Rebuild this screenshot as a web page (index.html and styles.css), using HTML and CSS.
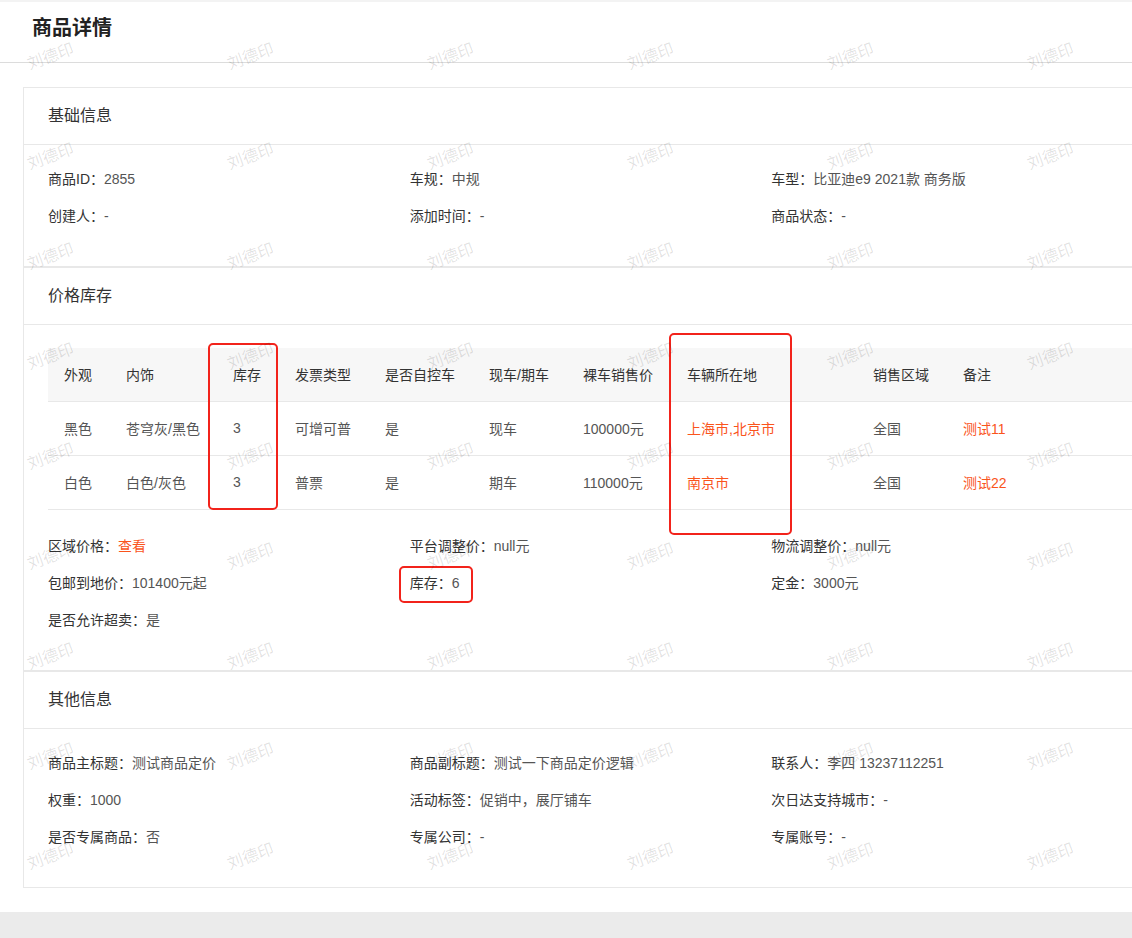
FILE: index.html
```html
<!DOCTYPE html>
<html lang="zh-CN">
<head>
    <meta charset="UTF-8">
    <meta name="viewport" content="width=device-width, initial-scale=1.0">
    <title>商品详情</title>
    <link rel="stylesheet" href="styles.css">
</head>
<body>
    <div class="page">
        <div class="page-header">
            <h1>商品详情</h1>
        </div>

        <div class="detail-card">
            <section class="panel">
                <div class="panel-title">基础信息</div>
                <div class="panel-body">
                    <div class="info-grid">
                        <div class="info-item"><span class="label">商品ID：</span><span class="value">2855</span></div>
                        <div class="info-item"><span class="label">车规：</span><span class="value">中规</span></div>
                        <div class="info-item"><span class="label">车型：</span><span class="value">比亚迪e9 2021款 商务版</span></div>
                        <div class="info-item"><span class="label">创建人：</span><span class="value">-</span></div>
                        <div class="info-item"><span class="label">添加时间：</span><span class="value">-</span></div>
                        <div class="info-item"><span class="label">商品状态：</span><span class="value">-</span></div>
                    </div>
                </div>
            </section>

            <section class="panel">
                <div class="panel-title">价格库存</div>
                <div class="panel-body">
                    <table class="stock-table">
                        <thead>
                            <tr>
                                <th>外观</th>
                                <th>内饰</th>
                                <th>库存</th>
                                <th>发票类型</th>
                                <th>是否自控车</th>
                                <th>现车/期车</th>
                                <th>裸车销售价</th>
                                <th>车辆所在地</th>
                                <th>销售区域</th>
                                <th>备注</th>
                            </tr>
                        </thead>
                        <tbody>
                            <tr>
                                <td>黑色</td>
                                <td>苍穹灰/黑色</td>
                                <td>3</td>
                                <td>可增可普</td>
                                <td>是</td>
                                <td>现车</td>
                                <td>100000元</td>
                                <td class="highlight">上海市,北京市</td>
                                <td>全国</td>
                                <td class="highlight">测试11</td>
                            </tr>
                            <tr>
                                <td>白色</td>
                                <td>白色/灰色</td>
                                <td>3</td>
                                <td>普票</td>
                                <td>是</td>
                                <td>期车</td>
                                <td>110000元</td>
                                <td class="highlight">南京市</td>
                                <td>全国</td>
                                <td class="highlight">测试22</td>
                            </tr>
                        </tbody>
                    </table>

                    <div class="info-grid after-table">
                        <div class="info-item"><span class="label">区域价格：</span><a class="link">查看</a></div>
                        <div class="info-item"><span class="label">平台调整价：</span><span class="value">null元</span></div>
                        <div class="info-item"><span class="label">物流调整价：</span><span class="value">null元</span></div>
                        <div class="info-item"><span class="label">包邮到地价：</span><span class="value">101400元起</span></div>
                        <div class="info-item"><span class="label">库存：</span><span class="value">6</span></div>
                        <div class="info-item"><span class="label">定金：</span><span class="value">3000元</span></div>
                        <div class="info-item"><span class="label">是否允许超卖：</span><span class="value">是</span></div>
                    </div>
                </div>
            </section>

            <section class="panel">
                <div class="panel-title">其他信息</div>
                <div class="panel-body">
                    <div class="info-grid">
                        <div class="info-item"><span class="label">商品主标题：</span><span class="value">测试商品定价</span></div>
                        <div class="info-item"><span class="label">商品副标题：</span><span class="value">测试一下商品定价逻辑</span></div>
                        <div class="info-item"><span class="label">联系人：</span><span class="value">李四 13237112251</span></div>
                        <div class="info-item"><span class="label">权重：</span><span class="value">1000</span></div>
                        <div class="info-item"><span class="label">活动标签：</span><span class="value">促销中，展厅铺车</span></div>
                        <div class="info-item"><span class="label">次日达支持城市：</span><span class="value">-</span></div>
                        <div class="info-item"><span class="label">是否专属商品：</span><span class="value">否</span></div>
                        <div class="info-item"><span class="label">专属公司：</span><span class="value">-</span></div>
                        <div class="info-item"><span class="label">专属账号：</span><span class="value">-</span></div>
                    </div>
                </div>
            </section>
        </div>

        <!-- red annotation boxes -->
        <div class="mark-box mark-stock-col"></div>
        <div class="mark-box mark-location-col"></div>
        <div class="mark-box mark-stock-total"></div>

        <div class="watermark" id="watermark"></div>
    </div>

    <script>
        // Fill the watermark layer
        const watermark = document.getElementById('watermark');
        for (let i = 0; i < 54; i++) {
            const mark = document.createElement('span');
            mark.textContent = '刘德印';
            watermark.appendChild(mark);
        }
    </script>
</body>
</html>
```

FILE: styles.css
```css
body {
    margin: 0;
    background: #ebebeb;
    font-family: 'Liberation Sans', 'Noto Sans CJK SC', sans-serif;
    font-size: 14px;
    color: #333;
}

.page {
    position: relative;
    background: #fff;
    border-top: 2px solid #f3f3f3;
    padding-bottom: 24px;
    overflow: hidden;
}

.page-header {
    height: 61px;
    padding: 0 32px;
    border-bottom: 1px solid #dcdcdc;
    box-sizing: border-box;
}

.page-header h1 {
    margin: 0;
    padding-top: 15px;
    font-size: 20px;
    line-height: 22px;
    font-weight: 600;
    color: #222;
}

.detail-card {
    width: 1135px;
    margin: 24px 0 0 23px;
}

.panel {
    border: 1px solid #e8e8e8;
}

.panel-title {
    height: 56px;
    line-height: 56px;
    padding: 0 24px;
    font-size: 16px;
    color: #333;
    border-bottom: 1px solid #e8e8e8;
}

.panel-body {
    padding: 23px 24px 24px;
}

.info-grid {
    display: grid;
    grid-template-columns: repeat(3, 1fr);
}

.info-grid.after-table {
    margin-top: 25px;
}

.info-item {
    line-height: 22px;
    margin-bottom: 15px;
    white-space: nowrap;
}

.info-item .label {
    color: #333;
}

.info-item .value {
    color: #555;
}

.link {
    color: #fa541c;
    cursor: pointer;
}

/* stock table */
.stock-table {
    width: 1085px;
    table-layout: fixed;
    border-collapse: separate;
    border-spacing: 0;
}

.stock-table th,
.stock-table td {
    box-sizing: border-box;
    height: 54px;
    padding: 0 16px 2px;
    text-align: left;
    white-space: nowrap;
    border-bottom: 1px solid #e8e8e8;
}

.stock-table th {
    background: #f7f7f7;
    font-weight: normal;
    color: #333;
}

.stock-table td {
    color: #555;
}

.stock-table td.highlight {
    color: #fa541c;
}

.stock-table th:nth-child(1) { width: 62px; }
.stock-table th:nth-child(2) { width: 107px; }
.stock-table th:nth-child(3) { width: 62px; }
.stock-table th:nth-child(4) { width: 90px; }
.stock-table th:nth-child(5) { width: 104px; }
.stock-table th:nth-child(6) { width: 94px; }
.stock-table th:nth-child(7) { width: 104px; }
.stock-table th:nth-child(8) { width: 186px; }
.stock-table th:nth-child(9) { width: 90px; }
.stock-table th:nth-child(10) { width: 186px; }

/* red annotation boxes drawn over the screenshot */
.mark-box {
    position: absolute;
    box-sizing: border-box;
    border: 2px solid #f2231b;
    border-radius: 5px;
}

.mark-stock-col {
    left: 208px;
    top: 341px;
    width: 70px;
    height: 167px;
}

.mark-location-col {
    left: 669px;
    top: 331px;
    width: 123px;
    height: 202px;
}

.mark-stock-total {
    left: 399px;
    top: 564px;
    width: 74px;
    height: 37px;
}

/* watermark layer */
.watermark {
    position: absolute;
    top: 3px;
    left: -50px;
    display: grid;
    grid-template-columns: repeat(6, 200px);
    grid-auto-rows: 100px;
    place-items: center;
    pointer-events: none;
}

.watermark span {
    font-size: 16px;
    color: rgba(0, 0, 0, 0.12);
    transform: rotate(-20deg);
    white-space: nowrap;
}
```
